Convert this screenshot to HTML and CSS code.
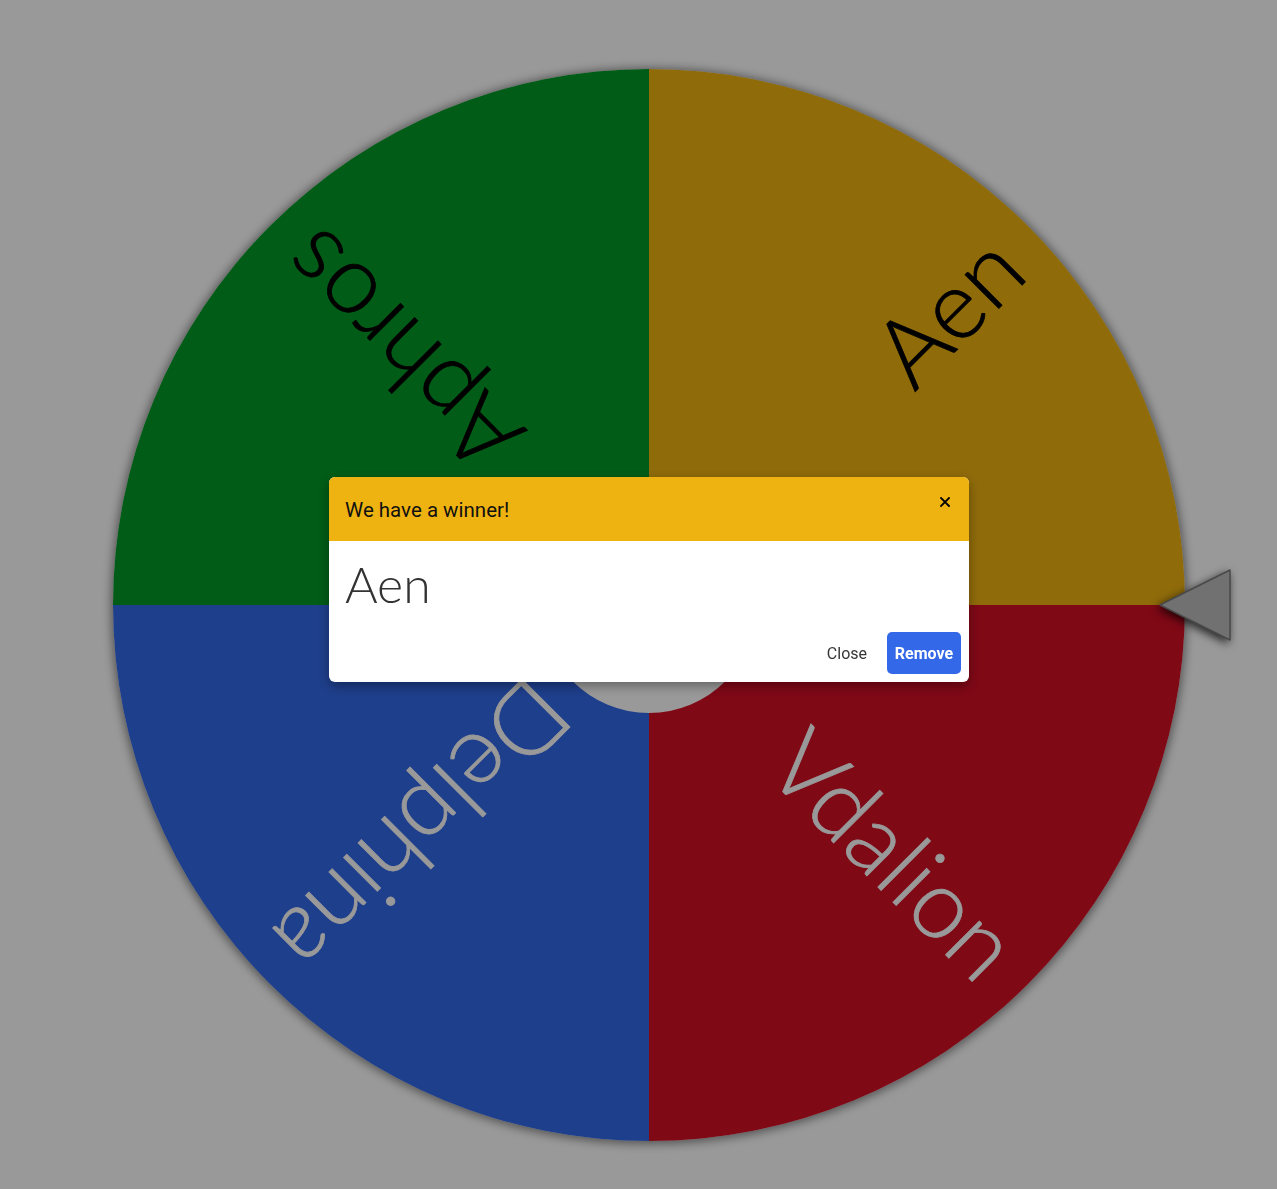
FILE: index.html
```html
<!DOCTYPE html>
<html lang="en">
<head>
<meta charset="utf-8">
<title>Wheel of Names</title>
<link rel="stylesheet" href="styles.css">
</head>
<body>
<main class="page">
  <div class="wheel-wrap">
    <div class="wheel">
      <svg class="wheel-svg" viewBox="0 0 1072 1072" width="1072" height="1072">
        <path d="M536 536 L536 0 A536 536 0 0 0 0 536 Z" fill="#009925"/>
        <path d="M536 536 L1072 536 A536 536 0 0 0 536 0 Z" fill="#EEB211"/>
        <path d="M536 536 L536 1072 A536 536 0 0 0 1072 536 Z" fill="#D50F25"/>
        <path d="M536 536 L0 536 A536 536 0 0 0 536 1072 Z" fill="#3369E8"/>
        <g class="labels">
          <text class="label dark" x="1038" y="536" transform="rotate(-45 536 536)">Aen</text>
          <text class="label dark" x="1038" y="536" transform="rotate(-135 536 536)">Aphros</text>
          <text class="label light" x="1038" y="536" transform="rotate(135 536 536)">Delphina</text>
          <text class="label light" x="1038" y="536" transform="rotate(45 536 536)">Vdalion</text>
        </g>
        <circle cx="536" cy="536" r="108" fill="#ffffff"/>
      </svg>
    </div>
    <svg class="pointer" viewBox="0 0 72 72" width="72" height="72">
      <polygon points="1,36 71,1 71,71" fill="#bcbcbc" stroke="#7a7a7a" stroke-width="1.5" stroke-linejoin="round"/>
    </svg>
  </div>
</main>

<div class="overlay">
  <section class="modal" role="dialog" aria-label="We have a winner!">
    <header class="modal-head">
      <h2 class="modal-title">We have a winner!</h2>
      <button class="modal-x" aria-label="Close">
        <svg viewBox="0 0 10 10" width="10" height="10"><path d="M1 1 L9 9 M9 1 L1 9" stroke="#000" stroke-width="1.8" stroke-linecap="square"/></svg>
      </button>
    </header>
    <div class="modal-body">
      <div class="winner">Aen</div>
    </div>
    <footer class="modal-foot">
      <button class="btn btn-text">Close</button>
      <button class="btn btn-primary">Remove</button>
    </footer>
  </section>
</div>
</body>
</html>
```
FILE: styles.css
```css
html, body {
  margin: 0;
  padding: 0;
}
body {
  background: #ffffff;
  width: 1277px;
  height: 1189px;
  overflow: hidden;
  font-family: Roboto, "Liberation Sans", Arial, sans-serif;
}
.page {
  padding: 69px 0 0 113px;
}
.wheel-wrap {
  position: relative;
  width: 1072px;
  height: 1072px;
}
.wheel {
  width: 1072px;
  height: 1072px;
  border-radius: 50%;
  box-shadow: 0 1px 10px 2px rgba(0, 0, 0, 0.45);
  filter: blur(0.7px);
}
.wheel-svg {
  display: block;
}
.label {
  font-family: Lato, "Open Sans", sans-serif;
  font-weight: 300;
  font-size: 96px;
  text-anchor: end;
  dominant-baseline: central;
  stroke-width: 0.8px;
}
.label.dark { fill: #000000; stroke: #000000; }
.label.light { fill: #ffffff; stroke: #ffffff; }
.pointer {
  position: absolute;
  left: 1046px;
  top: 500px;
  display: block;
  filter: drop-shadow(-2px 3px 5px rgba(0, 0, 0, 0.75));
}
.overlay {
  position: fixed;
  inset: 0;
  background: rgba(0, 0, 0, 0.4);
  display: flex;
  align-items: flex-start;
  justify-content: flex-start;
  padding: 477px 0 0 329px;
  box-sizing: border-box;
}
.modal {
  width: 640px;
  background: #ffffff;
  border-radius: 6px;
  overflow: hidden;
  box-shadow: 0 4px 12px rgba(0, 0, 0, 0.35);
}
.modal-head {
  height: 64px;
  background: #efb311;
  display: flex;
  align-items: center;
  justify-content: space-between;
  padding: 0 18px 0 16px;
}
.modal-title {
  margin: 0;
  font-size: 20.5px;
  font-weight: 400;
  color: #111111;
  padding-top: 1px;
}
.modal-x {
  border: 0;
  background: none;
  padding: 0;
  width: 12px;
  height: 12px;
  display: flex;
  align-items: center;
  justify-content: center;
  margin-top: -14px;
  cursor: pointer;
}
.modal-body {
  padding: 13px 16px 0;
}
.winner {
  font-family: Lato, "Open Sans", sans-serif;
  font-weight: 300;
  font-size: 50px;
  line-height: 60px;
  color: #333333;
}
.modal-foot {
  display: flex;
  justify-content: flex-end;
  align-items: center;
  gap: 12px;
  padding: 18px 8px 8px;
}
.btn {
  font-family: Roboto, "Liberation Sans", Arial, sans-serif;
  font-size: 16px;
  height: 42px;
  border: 0;
  border-radius: 5px;
  padding: 0 8px;
  cursor: pointer;
}
.btn-text {
  background: transparent;
  color: #363636;
}
.btn-primary {
  background: #3369e8;
  color: #ffffff;
  font-weight: 700;
  width: 74px;
  padding: 0;
}
```
